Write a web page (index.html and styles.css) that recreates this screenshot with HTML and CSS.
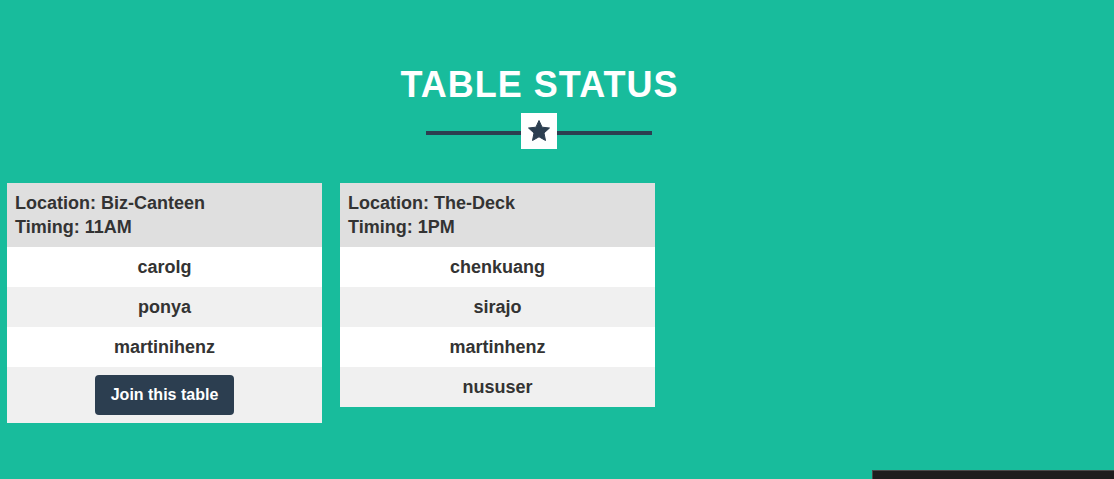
FILE: index.html
```html
<!DOCTYPE html>
<html>
<head>
<meta charset="utf-8">
<link rel="stylesheet" href="styles.css">
</head>
<body>
<header class="hero">
  <h1 class="title">TABLE STATUS</h1>
  <div class="divider">
    <span class="line"></span>
    <span class="star-box">
      <svg width="24" height="24" viewBox="0 0 24 24"><polygon fill="#2c3e50" points="12,1.5 15.1,8.2 22.5,9 17,14 18.5,21.5 12,17.8 5.5,21.5 7,14 1.5,9 8.9,8.2" stroke="#2c3e50" stroke-width="1" stroke-linejoin="round"/></svg>
    </span>
    <span class="line"></span>
  </div>
</header>
<main class="cards">
  <section class="card">
    <div class="card-head">
      <div>Location: Biz-Canteen</div>
      <div>Timing: 11AM</div>
    </div>
    <div class="row">carolg</div>
    <div class="row alt">ponya</div>
    <div class="row">martinihenz</div>
    <div class="row alt btn-row"><button class="btn">Join this table</button></div>
  </section>
  <section class="card">
    <div class="card-head">
      <div>Location: The-Deck</div>
      <div>Timing: 1PM</div>
    </div>
    <div class="row">chenkuang</div>
    <div class="row alt">sirajo</div>
    <div class="row">martinhenz</div>
    <div class="row alt">nususer</div>
  </section>
</main>
<div class="corner-bar"></div>
</body>
</html>
```
FILE: styles.css
```css
html, body {
  margin: 0;
  padding: 0;
}
body {
  background: #18bc9c;
  font-family: "Liberation Sans", Arial, sans-serif;
  color: #333;
  height: 479px;
  overflow: hidden;
}
.hero {
  width: 1078px;
  padding-top: 65px;
  text-align: center;
}
.title {
  margin: 0;
  font-size: 36px;
  line-height: 40px;
  font-weight: 700;
  letter-spacing: 1px;
  text-indent: 1px;
  color: #fff;
}
.divider {
  margin-top: 8px;
  display: flex;
  justify-content: center;
  align-items: center;
  height: 36px;
}
.line {
  width: 95px;
  height: 4px;
  margin-top: 4px;
  background: #2c3e50;
}
.star-box {
  width: 36px;
  height: 36px;
  background: #fff;
  display: flex;
  align-items: center;
  justify-content: center;
}
.star-box svg {
  display: block;
}
.cards {
  display: flex;
  align-items: flex-start;
  gap: 18px;
  padding-left: 7px;
  margin-top: 34px;
}
.card {
  width: 315px;
  font-size: 18px;
  font-weight: 700;
  line-height: 24px;
}
.card-head {
  background: #dfdfdf;
  padding: 8px 8px;
}
.row {
  background: #fff;
  text-align: center;
  padding: 8px;
}
.row.alt {
  background: #f0f0f0;
}
.btn-row {
  padding: 8px;
}
.btn {
  font-family: "Liberation Sans", Arial, sans-serif;
  font-size: 16px;
  font-weight: 700;
  line-height: 20px;
  color: #fff;
  background: #2c3e50;
  border: none;
  border-radius: 4px;
  padding: 10px 15px;
  width: 139px;
  height: 40px;
  display: inline-block;
  vertical-align: top;
}
.corner-bar {
  position: fixed;
  left: 872px;
  right: 0;
  top: 470px;
  bottom: 0;
  background: #1e1e1e;
  border-top: 1px solid #4a4a4a;
  border-left: 1px solid #4a4a4a;
}
```
